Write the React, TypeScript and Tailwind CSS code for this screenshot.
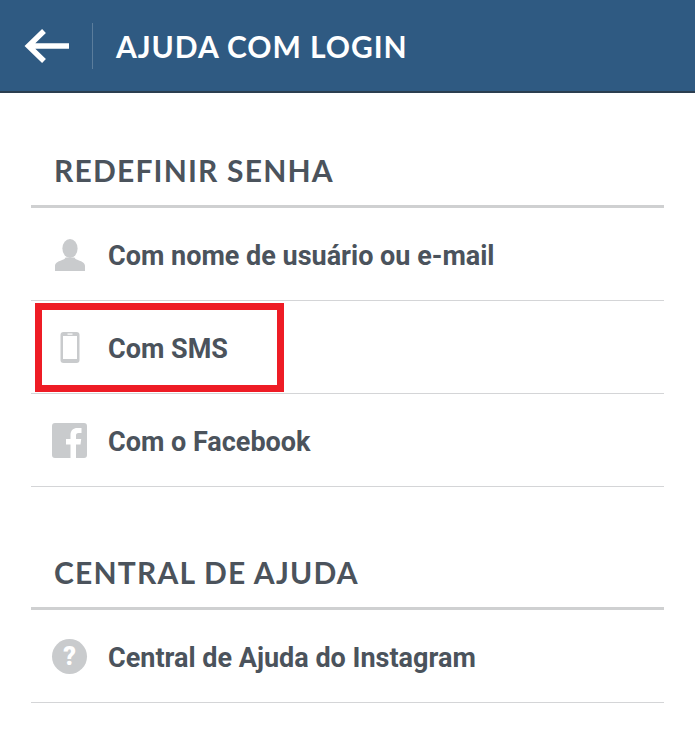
import React from "react";

const Row = ({ icon, label, children }: { icon: React.ReactNode; label: string; children?: React.ReactNode }) => (
  <div className="relative flex h-[93px] items-center border-b border-[#d4d5d7]">
    <div className="flex w-[77px] shrink-0 justify-center">{icon}</div>
    <span className="pt-[5px] font-['Roboto',sans-serif] text-[27px] font-bold tracking-[0px] text-[#4b535c]">{label}</span>
    {children}
  </div>
);

const Section = ({ title, children }: { title: string; children: React.ReactNode }) => (
  <section>
    <h2 className="flex h-[36px] items-center pl-[23px] font-['Lato',sans-serif] text-[30px] font-bold leading-none tracking-[1.2px] text-[#4b535c]">{title}</h2>
    <div className="mt-[17px] border-t-[3px] border-[#cfd0d1]">{children}</div>
  </section>
);

export default function App() {
  return (
    <div className="h-[731px] w-[695px] overflow-hidden bg-white">
      <header className="flex h-[93px] items-center border-b-[2px] border-[#2b3e50] bg-[#2f5a82]">
        <div className="flex h-[46px] w-[93px] items-center justify-center border-r border-[#5b7d9c]">
          <svg width="46" height="38" viewBox="0 0 46 38" className="ml-[1px]">
            <path d="M4 19H45M20 4L4.500 19l15.500 15" fill="none" stroke="#ffffff" strokeWidth="5.500" strokeLinecap="butt" />
          </svg>
        </div>
        <h1 className="pl-[23px] font-['Lato',sans-serif] text-[30px] font-bold leading-none tracking-[0.95px] text-white">AJUDA COM LOGIN</h1>
      </header>
      <main className="mx-[31px] w-[633px] pt-[59px]">
        <Section title="REDEFINIR SENHA">
          <Row
            label="Com nome de usuário ou e-mail"
            icon={
              <svg width="30" height="32" viewBox="0 0 30 32" fill="#c9cbcd" className="mt-[1px]">
                <ellipse cx="15" cy="9.500" rx="7.600" ry="9.500" />
                <path d="M0 32v-5c0-3 3-4.500 6-5.500 2.500-.9 4-1.500 4.500-3h9c.5 1.500 2 2.100 4.500 3 3 1 6 2.500 6 5.500v5z" />
              </svg>
            }
          />
          <Row
            label="Com SMS"
            icon={
              <svg width="20" height="31" viewBox="0 0 20 31">
                <rect x="0.500" y="0" width="19" height="31" rx="3" fill="#c9cbcd" />
                <rect x="3" y="4" width="14" height="23" fill="#ffffff" />
                <rect x="7.500" y="1.500" width="5" height="1.200" fill="#ffffff" />
              </svg>
            }
          >
            <div className="absolute left-[4px] top-[2px] h-[89px] w-[249px] border-[7px] border-[#ee1c25]" />
          </Row>
          <Row
            label="Com o Facebook"
            icon={
              <svg width="35" height="35" viewBox="0 0 35 35">
                <path fillRule="evenodd" fill="#c9cbcd" d="M3 0h29a3 3 0 0 1 3 3v29a3 3 0 0 1-3 3h-8V21.500h4.500l.7-5.500H24v-3.500c0-1.600.5-2.600 2.700-2.600H29.500V5.100c-.5-.1-2.200-.2-4.100-.2-4.100 0-6.900 2.500-6.900 7V16H14v5.500h4.500V35H3a3 3 0 0 1-3-3V3a3 3 0 0 1 3-3z" />
              </svg>
            }
          />
        </Section>
        <div className="mt-[67px]">
          <Section title="CENTRAL DE AJUDA">
            <Row
              label="Central de Ajuda do Instagram"
              icon={
                <div className="mt-[1px] flex h-[35px] w-[35px] items-center justify-center rounded-full bg-[#c9cbcd] font-['Roboto',sans-serif] text-[25px] font-black leading-none text-white">?</div>
              }
            />
          </Section>
        </div>
      </main>
    </div>
  );
}
